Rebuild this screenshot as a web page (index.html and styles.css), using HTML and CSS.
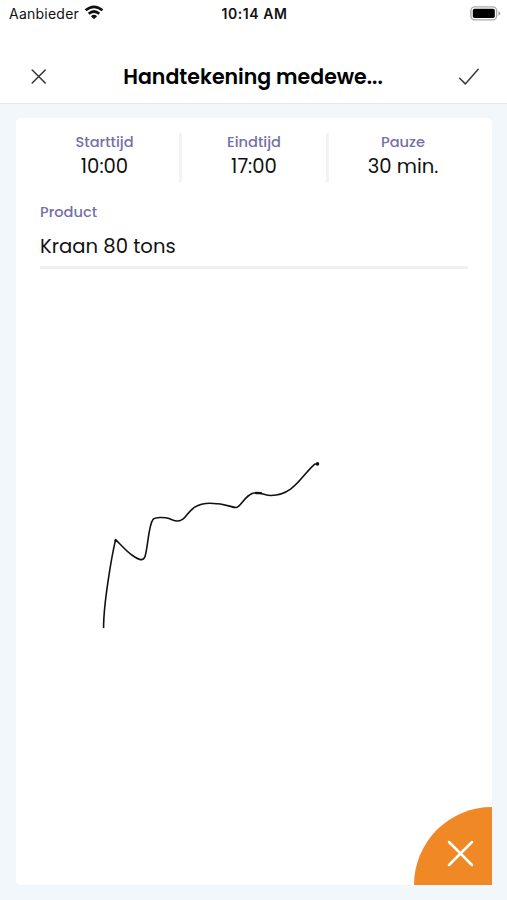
FILE: index.html
```html
<!DOCTYPE html>
<html lang="nl">
<head>
<meta charset="utf-8">
<title>Handtekening</title>
<link rel="stylesheet" href="styles.css">
</head>
<body>
<div class="status">
  <div class="carrier"><span class="carrier-name">Aanbieder</span>
    <svg class="wifi" width="20" height="15" viewBox="0 0 20 15" fill="none" stroke="#111" stroke-width="2.7"><path d="M1.6 5.3Q10-1.7 18.4 5.3M4.7 8.7Q10 4.3 15.3 8.7"/><path d="M6.9 11.2Q10 8.500 13.1 11.2L10 14.3Z" fill="#111" stroke="none"/></svg>
  </div>
  <div class="clock">10:14 AM</div>
  <div class="power"><svg width="31" height="15" viewBox="0 0 31 15"><rect x=".9" y=".9" width="25.7" height="13" rx="4" fill="#fff" stroke="#aaa" stroke-width="1.4"/><rect x="2.8" y="2.8" width="22" height="9.2" rx="1.8" fill="#000"/><path d="M28.4 5q2 1 2 2.4t-2 2.4z" fill="#aaa"/></svg></div>
</div>
<header class="bar">
  <svg width="16" height="16" viewBox="0 0 16 16" fill="none" stroke="#333" stroke-width="1.5" stroke-linecap="round"><path d="M1.2 1l13 13M14.200 1L1.200 14"/></svg>
  <h1 class="title">Handtekening medewe...</h1>
  <svg width="22" height="18" viewBox="0 0 22 18" fill="none" stroke="#3a3a3a" stroke-width="1.5" stroke-linecap="round" stroke-linejoin="round"><path d="M1.7 10.2l5.600 5.700L20.200 1.200"/></svg>
</header>
<main class="card">
  <div class="times">
    <div class="time"><span class="label">Starttijd</span><span class="value">10:00</span></div>
    <div class="time"><span class="label">Eindtijd</span><span class="value">17:00</span></div>
    <div class="time"><span class="label">Pauze</span><span class="value">30 min.</span></div>
  </div>
  <section class="product">
    <span class="label">Product</span>
    <div class="value product-name">Kraan 80 tons</div>
  </section>
  <svg class="signature" viewBox="16 269 476 616" fill="none" stroke="#111" stroke-width="1.6" stroke-linecap="round" stroke-linejoin="round">
    <path d="M103.600 627.500C103.500 604 111.500 557 115.600 539.600C121 545 127 552 132.500 555.500C137 558.500 143 562.500 145 556.500C148 547 148.500 525 153 519.500C155 517 165 517.200 169 518.500C173 520 178 523 183 519C188 516 191 503.200 210 503.200C227 503.200 232 508 236.500 507.500C241 507 246 492.800 256 492.800C263 493 265 495.500 271 495.500C294 495 301 476 314.500 464.300L317.500 463.800"/>
    <path d="M115.500 540.500l.6.3M256 493l5 .2" stroke-width="2.300"/><circle cx="317.500" cy="463.900" r="1" fill="#111"/>
  </svg>
  <button class="clear" aria-label="Wissen"><svg width="27" height="27" viewBox="0 0 27 27" fill="none" stroke="#fff" stroke-width="2.500" stroke-linecap="round"><path d="M2 2l23 23M25 2L2 25"/></svg></button>
</main>
</body>
</html>
```
FILE: styles.css
```css
* { box-sizing: border-box; }
body {
  margin: 0;
  height: 900px;
  display: flex;
  flex-direction: column;
  background: #f2f7fb;
  color: #111;
  font-family: Poppins, Inter, sans-serif;
  overflow: hidden;
}
svg { display: block; flex: none; }
.status {
  height: 50px;
  padding: 5px 6px 0 9px;
  display: grid;
  grid-template-columns: 1fr auto 1fr;
  align-items: start;
  background: #fff;
  font: 14px/18px Inter, sans-serif;
}
.carrier { display: flex; gap: 5px; }
.carrier-name { letter-spacing: .24px; }
.clock { font-weight: 600; letter-spacing: .55px; margin-left: -1px; }
.power { justify-self: end; padding-top: 1px; }
.bar {
  height: 54px;
  padding: 0 27px 0 31px;
  display: flex;
  align-items: center;
  justify-content: space-between;
  background: #fff;
  border-bottom: 1px solid #e5e9ed;
}
.title { margin: 0; padding-left: 1px; font-size: 20.5px; line-height: 30px; font-weight: 600; color: #000; white-space: nowrap; }
.card {
  position: relative;
  height: 767px;
  margin: 14px 15px 15px 16px;
  display: flex;
  flex-direction: column;
  background: #fff;
  border-radius: 5px 5px 0 5px;
  overflow: hidden;
}
.times { display: grid; grid-template-columns: 149px 147px 151px; padding: 15px 0 0 14px; }
.time { height: 49px; display: flex; flex-direction: column; align-items: center; }
.time + .time { border-left: 3px solid #f1f3f5; }
.time .label { line-height: 18px; }
.label { font-size: 14.6px; line-height: 20px; font-weight: 500; color: #7470a8; }
.value { font-size: 19.6px; line-height: 28px; color: #111; white-space: nowrap; }
.time .value { line-height: 30px; }
.product { margin: 20px 24px 0; border-bottom: 3px solid #eef0f2; height: 67px; }
.product .label { display: block; }
.product-name { margin-top: 10px; }
.signature { width: 476px; height: 616px; }
.clear {
  position: absolute;
  right: 0;
  bottom: 0;
  width: 78px;
  height: 78px;
  padding: 14px 0 0 14px;
  display: flex;
  align-items: center;
  justify-content: center;
  border: 0;
  border-radius: 78px 0 0 0;
  background: #f08826;
}
```
